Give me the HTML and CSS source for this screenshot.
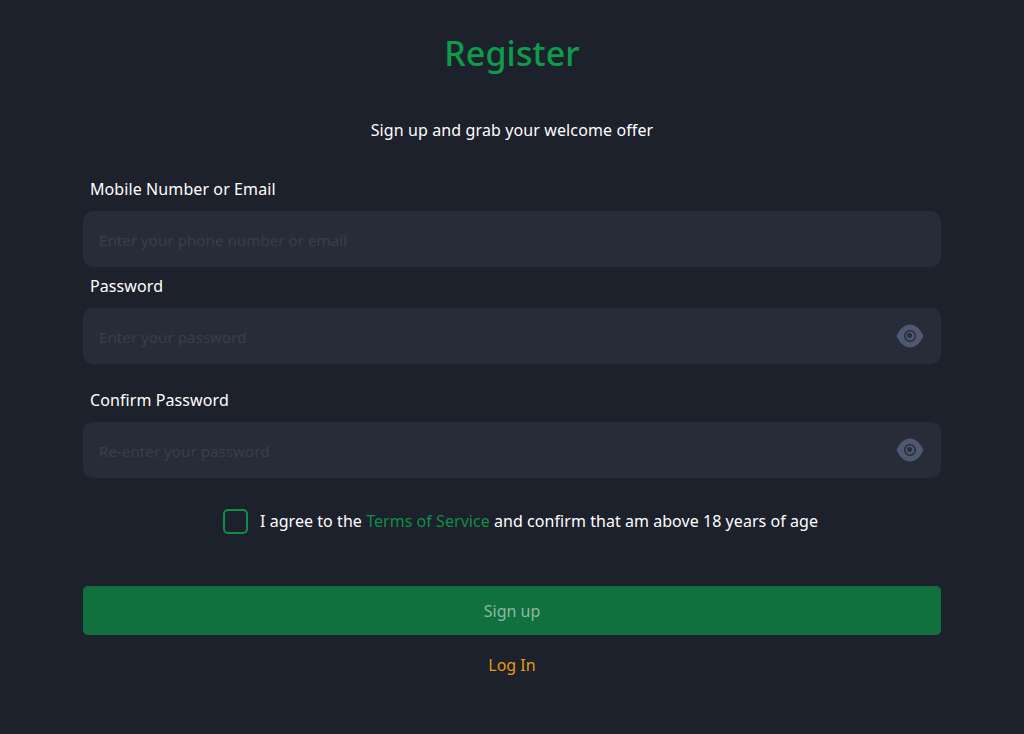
FILE: index.html
```html
<!DOCTYPE html>
<html lang="en">
<head>
<meta charset="utf-8">
<title>Register</title>
<link rel="stylesheet" href="styles.css">
</head>
<body>
<main class="page">
  <h1 class="title">Register</h1>
  <p class="subtitle">Sign up and grab your welcome offer</p>
  <form class="form">
    <div class="field field-first">
      <label class="label">Mobile Number or Email</label>
      <div class="control"><input class="input" type="text" placeholder="Enter your phone number or email"></div>
    </div>
    <div class="field field-second">
      <label class="label">Password</label>
      <div class="control">
        <input class="input" type="password" placeholder="Enter your password">
        <svg class="eye" viewBox="0 0 28 24"><path fill-rule="evenodd" d="M14 .5C8 .5 3.500 5.500 .5 12 3.500 18.500 8 23.500 14 23.500S24.500 18.500 27.500 12C24.500 5.500 20 .5 14 .5zM14 6a6 6 0 1 1 0 12 6 6 0 0 1 0-12zM14 7.500a4.500 4.500 0 1 0 0 9 4.500 4.500 0 0 0 0-9zM13.500 9a2.500 2.500 0 1 1 0 5 2.500 2.500 0 0 1 0-5z"/></svg>
      </div>
    </div>
    <div class="field field-third">
      <label class="label">Confirm Password</label>
      <div class="control">
        <input class="input" type="password" placeholder="Re-enter your password">
        <svg class="eye" viewBox="0 0 28 24"><path fill-rule="evenodd" d="M14 .5C8 .5 3.500 5.500 .5 12 3.500 18.500 8 23.500 14 23.500S24.500 18.500 27.500 12C24.500 5.500 20 .5 14 .5zM14 6a6 6 0 1 1 0 12 6 6 0 0 1 0-12zM14 7.500a4.500 4.500 0 1 0 0 9 4.500 4.500 0 0 0 0-9zM13.500 9a2.500 2.500 0 1 1 0 5 2.500 2.500 0 0 1 0-5z"/></svg>
      </div>
    </div>
    <div class="agree">
      <span class="checkbox"></span>
      <span class="agree-text">I agree to the <a class="terms">Terms of Service</a> and confirm that am above 18 years of age</span>
    </div>
    <button class="submit" type="button">Sign up</button>
    <a class="login">Log In</a>
  </form>
</main>
</body>
</html>
```
FILE: styles.css
```css
* { box-sizing: border-box; }
html, body { margin: 0; height: 100%; }
body {
  background: #1d212b;
  color: #fff;
  font-family: "Noto Sans", "Open Sans", sans-serif;
  overflow: hidden;
}
.page { padding: 30px 83px 0; }
.title {
  margin: 0;
  height: 46px;
  line-height: 46px;
  font-size: 34px;
  font-weight: 500;
  letter-spacing: 0.1px;
  color: #0d9d4a;
  text-align: center;
}
.subtitle {
  margin: 42px 0 0;
  height: 24px;
  line-height: 24px;
  font-size: 16px;
  letter-spacing: 0.11px;
  text-align: center;
}
.form { display: flex; flex-direction: column; }
.field-first { margin-top: 35px; }
.field-second { margin-top: 7px; }
.field-third { margin-top: 24px; }
.label {
  display: block;
  height: 24px;
  line-height: 24px;
  padding-left: 7px;
  font-size: 16px;
  letter-spacing: 0.09px;
  margin-bottom: 10px;
}
.control { position: relative; }
.input {
  display: block;
  width: 100%;
  height: 56px;
  padding: 2px 16px 0;
  border: 0;
  border-radius: 10px;
  background: #282c38;
  color: #fff;
  font: 15.2px "Noto Sans", "Open Sans", sans-serif;
  outline: 0;
}
.input::placeholder { color: #393e4c; opacity: 1; }
.eye {
  position: absolute;
  right: 17px;
  top: 16px;
  width: 28px;
  height: 24px;
  fill: #4e5870;
}
.agree {
  display: flex;
  align-items: center;
  justify-content: center;
  gap: 12px;
  margin-top: 29px;
  height: 28px;
  padding-left: 17px;
}
.checkbox {
  width: 25px;
  height: 25px;
  border: 2px solid #0f8f46;
  border-radius: 5px;
}
.agree-text { font-size: 16px; letter-spacing: 0.05px; }
.terms { color: #0f8f46; }
.submit {
  margin-top: 51px;
  height: 49px;
  border: 0;
  border-radius: 5px;
  background: #10713e;
  color: #8fb8a2;
  font: 16px "Noto Sans", "Open Sans", sans-serif;
}
.login {
  margin-top: 18px;
  height: 24px;
  line-height: 24px;
  font-size: 16px;
  color: #e79b0e;
  text-align: center;
}
```
